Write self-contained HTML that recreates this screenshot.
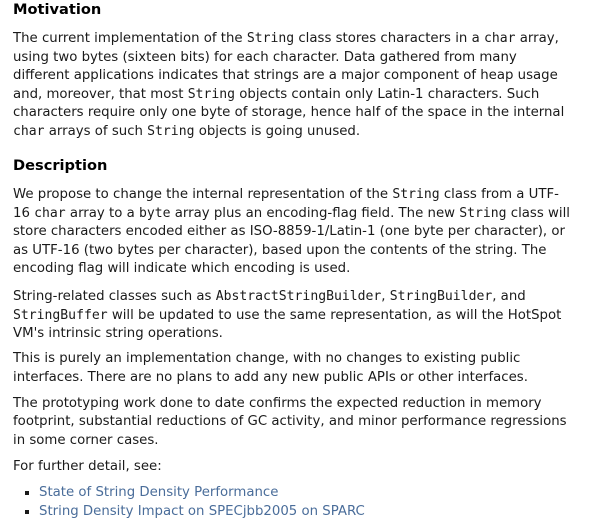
<!DOCTYPE html>
<html><head><meta charset="utf-8"><style>
html,body{margin:0;padding:0;background:#fff;}
body{width:601px;height:529px;overflow:hidden;font-family:"DejaVu Sans","Liberation Sans",sans-serif;font-size:13.3px;line-height:18.5px;color:#1a1a1a;}
.c{padding:0 0 0 13px;width:588px;white-space:nowrap;}
h2{font-size:14.6px;font-weight:bold;margin:0;line-height:20px;color:#000;}
p{margin:0 0 7.7px 0;}
code{font-family:"DejaVu Sans Mono","Liberation Mono",monospace;font-size:13.1px;line-height:0;}
ul{margin:0;padding:0 0 0 26px;list-style:square;}
li{line-height:18.5px;}
a{color:#4a6d9a;text-decoration:none;}
</style></head><body><div class="c">
<h2 style="margin-top:0">Motivation</h2>
<p style="margin-top:10px">The current implementation of the <code>String</code> class stores characters in a <code>char</code> array,<br>using two bytes (sixteen bits) for each character. Data gathered from many<br>different applications indicates that strings are a major component of heap usage<br>and, moreover, that most <code>String</code> objects contain only Latin-1 characters. Such<br>characters require only one byte of storage, hence half of the space in the internal<br><code>char</code> arrays of such <code>String</code> objects is going unused.</p>
<h2 style="margin-top:15px">Description</h2>
<p style="margin-top:10px;margin-bottom:9.5px">We propose to change the internal representation of the <code>String</code> class from a UTF-<br>16 <code>char</code> array to a <code>byte</code> array plus an encoding-flag field. The new <code>String</code> class will<br>store characters encoded either as ISO-8859-1/Latin-1 (one byte per character), or<br>as UTF-16 (two bytes per character), based upon the contents of the string. The<br>encoding flag will indicate which encoding is used.</p>
<p style="margin-bottom:6.5px">String-related classes such as <code>AbstractStringBuilder</code>, <code>StringBuilder</code>, and<br><code>StringBuffer</code> will be updated to use the same representation, as will the HotSpot<br>VM's intrinsic string operations.</p>
<p>This is purely an implementation change, with no changes to existing public<br>interfaces. There are no plans to add any new public APIs or other interfaces.</p>
<p>The prototyping work done to date confirms the expected reduction in memory<br>footprint, substantial reductions of GC activity, and minor performance regressions<br>in some corner cases.</p>
<p>For further detail, see:</p>
<ul>
<li><a>State of String Density Performance</a></li>
<li><a>String Density Impact on SPECjbb2005 on SPARC</a></li>
</ul>
</div></body></html>
